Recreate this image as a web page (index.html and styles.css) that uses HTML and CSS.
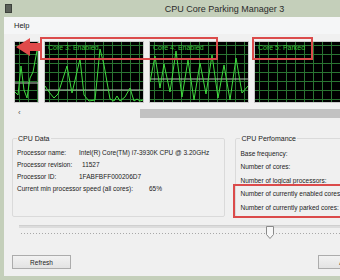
FILE: index.html
```html
<!DOCTYPE html>
<html lang="en-us">
<head>
    <meta charset="UTF-8">
    <title>CPU Core Parking Manager 3</title>
    <link rel="stylesheet" href="styles.css">
</head>
<body>
    <div class="frame">
        <div class="titlebar">
            <span class="app-icon"></span>
            <span class="title">CPU Core Parking Manager 3</span>
        </div>
        <div class="client">
            <div class="menubar"><span>Help</span></div>

            <div class="graphs">
                <div class="graph graph-cut">
                    <svg viewBox="0 0 23 60" preserveAspectRatio="none">
                        <line class="avg" x1="0" y1="41" x2="23" y2="41"/>
                        <polyline class="trace" points="0,50 3,53 6,24 9,48 12,56 15,36 18,30 23,3"/>
                    </svg>
                </div>
                <div class="graph">
                    <span class="core-label">Core 3: Enabled</span>
                    <svg viewBox="0 0 98 60" preserveAspectRatio="none">
                        <line class="avg" x1="0" y1="48" x2="98" y2="48"/>
                        <polyline class="trace" points="0,44 4,50 9,56 13,52 22,24 27,51 35,17 39,53 44,59 50,58 55,7 59,23 65,57 69,59 72,54 75,59 80,55 85,46 89,59 92,57 95,59 98,58"/>
                    </svg>
                </div>
                <div class="graph">
                    <span class="core-label">Core 4: Enabled</span>
                    <svg viewBox="0 0 98 60" preserveAspectRatio="none">
                        <line class="avg" x1="0" y1="37" x2="98" y2="37"/>
                        <polyline class="trace" points="0,40 5,14 10,46 14,22 20,50 26,9 32,55 38,18 44,58 50,21 56,52 62,13 68,56 74,23 80,58 86,16 92,51 98,44"/>
                    </svg>
                </div>
                <div class="graph">
                    <span class="core-label">Core 5: Parked</span>
                </div>
            </div>

            <div class="hscroll">
                <span class="scroll-arrow">&lsaquo;</span>
                <div class="scroll-thumb"></div>
            </div>

            <div class="groups">
                <fieldset class="group group-data">
                    <legend>CPU Data</legend>
                    <div class="row"><span class="lbl">Processor name:</span><span>Intel(R) Core(TM) i7-3930K CPU @ 3.20GHz</span></div>
                    <div class="row"><span class="lbl">Processor revision:</span><span class="val-rev">11527</span></div>
                    <div class="row"><span class="lbl">Processor ID:</span><span>1FABFBFF000206D7</span></div>
                    <div class="row"><span class="lbl-wide">Current min processor speed (all cores):</span><span>65%</span></div>
                </fieldset>
                <fieldset class="group group-perf">
                    <legend>CPU Perfomance</legend>
                    <div class="row">Base frequency:</div>
                    <div class="row">Number of cores:</div>
                    <div class="row">Number of logical processors:</div>
                    <div class="row">Number of currently enabled cores:</div>
                    <div class="row">Number of currently parked cores:</div>
                </fieldset>
            </div>

            <div class="slider">
                <div class="track"></div>
                <svg class="knob" viewBox="0 0 8 13">
                    <polygon points="0.5,0.5 7.5,0.5 7.5,8.5 4,12.5 0.5,8.5"/>
                </svg>
                <div class="ticks"></div>
            </div>

            <div class="buttons">
                <button class="btn">Refresh</button>
                <button class="btn btn-apply">Apply</button>
            </div>
        </div>

        <!-- annotations drawn over the screenshot -->
        <svg class="pointer" viewBox="0 0 30 22">
            <polygon points="3,10 17,1 17,6 29,6 29,14 17,14 17,19"/>
        </svg>
        <div class="mark mark-core3"></div>
        <div class="mark mark-core5"></div>
        <div class="mark mark-perf"></div>
    </div>
</body>
</html>
```

FILE: styles.css
```css
html, body {
    margin: 0;
    padding: 0;
}

body {
    width: 340px;
    height: 280px;
    overflow: hidden;
    background: #c4cfba;
    font-family: "Liberation Sans", Arial, sans-serif;
    color: #222;
}

.frame {
    position: relative;
    width: 448px;
    height: 280px;
    background: #c4cfba;
}

.titlebar {
    height: 17px;
    display: flex;
    align-items: center;
}

.app-icon {
    width: 5px;
    height: 7px;
    margin-left: 5px;
    background: #5a5f58;
    border: 1px solid #3d423c;
}

.title {
    flex: 1;
    text-align: center;
    font-size: 9px;
    color: #2b2b2b;
    margin-right: 11px;
}

.client {
    margin-left: 4px;
    width: 440px;
    height: 259px;
    background: #f0f0f0;
    font-size: 6.5px;
}

.menubar {
    height: 17px;
    display: flex;
    align-items: center;
    padding-left: 10px;
    background: #f5f6f7;
    font-size: 7.5px;
}

.graphs {
    display: flex;
    gap: 5px;
    padding: 7px 0 0 10px;
}

.graph {
    position: relative;
    flex-shrink: 0;
    width: 98px;
    height: 60px;
    border: 1px solid #c8c8c8;
    background-color: #000;
    background-image:
        repeating-linear-gradient(to right, #2a7432 0 1px, transparent 1px 9px),
        repeating-linear-gradient(to bottom, #2a7432 0 1px, transparent 1px 9px);
    background-position: 4px 3px;
}

.graph-cut {
    width: 23px;
}

.graph svg {
    display: block;
    width: 100%;
    height: 100%;
}

.trace {
    fill: none;
    stroke: #3fdc3f;
    stroke-width: 1;
    vector-effect: non-scaling-stroke;
}

.avg {
    stroke: #b8c8b8;
    stroke-width: 1;
    vector-effect: non-scaling-stroke;
}

.core-label {
    position: absolute;
    top: 2px;
    left: 3px;
    font-size: 7px;
    color: #38c838;
}

.hscroll {
    display: flex;
    align-items: center;
    height: 10px;
    margin-top: 5px;
    padding-left: 14px;
}

.scroll-arrow {
    width: 122px;
    font-size: 8px;
    color: #555;
    line-height: 10px;
}

.scroll-thumb {
    flex: 1;
    height: 9px;
    background: #c2c2c2;
}

.groups {
    display: flex;
    gap: 10px;
    margin-top: 16px;
    padding-left: 8px;
}

.group {
    margin: 0;
    padding: 4px 4px 2px 4px;
    border: 1px solid #dadada;
    border-radius: 2px;
}

.group legend {
    padding: 0 1px;
    font-size: 7px;
    line-height: 9px;
}

.group-data {
    width: 205px;
}

.group-perf {
    width: 200px;
}

.row {
    display: flex;
    line-height: 12px;
    white-space: nowrap;
}

.group-perf .row {
    line-height: 13.4px;
}

.lbl {
    width: 62px;
    flex-shrink: 0;
}

.lbl-wide {
    margin-right: 16px;
}

.val-rev {
    margin-left: 3px;
}

.slider {
    position: relative;
    height: 18px;
    margin-top: 8px;
    padding-left: 15px;
}

.track {
    height: 2px;
    margin-top: 6px;
    background: #dcdcdc;
    border-top: 1px solid #cfcfcf;
}

.knob {
    position: absolute;
    left: 262px;
    top: 1px;
    width: 8px;
    height: 13px;
}

.knob polygon {
    fill: #f7f7f7;
    stroke: #8a8a8a;
    stroke-width: 1;
}

.ticks {
    height: 1px;
    margin: 5px 0 0 2px;
    background: repeating-linear-gradient(to right, #a8a8a8 0 1px, transparent 1px 3px);
}

.buttons {
    display: flex;
    margin-top: 12px;
    padding-left: 8px;
}

.btn {
    width: 59px;
    height: 14px;
    padding: 0;
    font-family: inherit;
    font-size: 6.5px;
    color: #222;
    background: linear-gradient(#f2f2f2, #e3e3e3);
    border: 1px solid #acacac;
    border-radius: 0;
}

.btn-apply {
    margin-left: 247px;
}

.pointer {
    position: absolute;
    left: 13px;
    top: 37px;
    width: 30px;
    height: 22px;
}

.pointer polygon {
    fill: #e04a4a;
}

.mark {
    position: absolute;
    border: 2px solid #db4b4b;
    box-sizing: border-box;
}

.mark-core3 {
    left: 40px;
    top: 37px;
    width: 178px;
    height: 23px;
}

.mark-core5 {
    left: 252px;
    top: 37px;
    width: 61px;
    height: 23px;
}

.mark-perf {
    left: 233px;
    top: 184px;
    width: 130px;
    height: 34px;
}
```
